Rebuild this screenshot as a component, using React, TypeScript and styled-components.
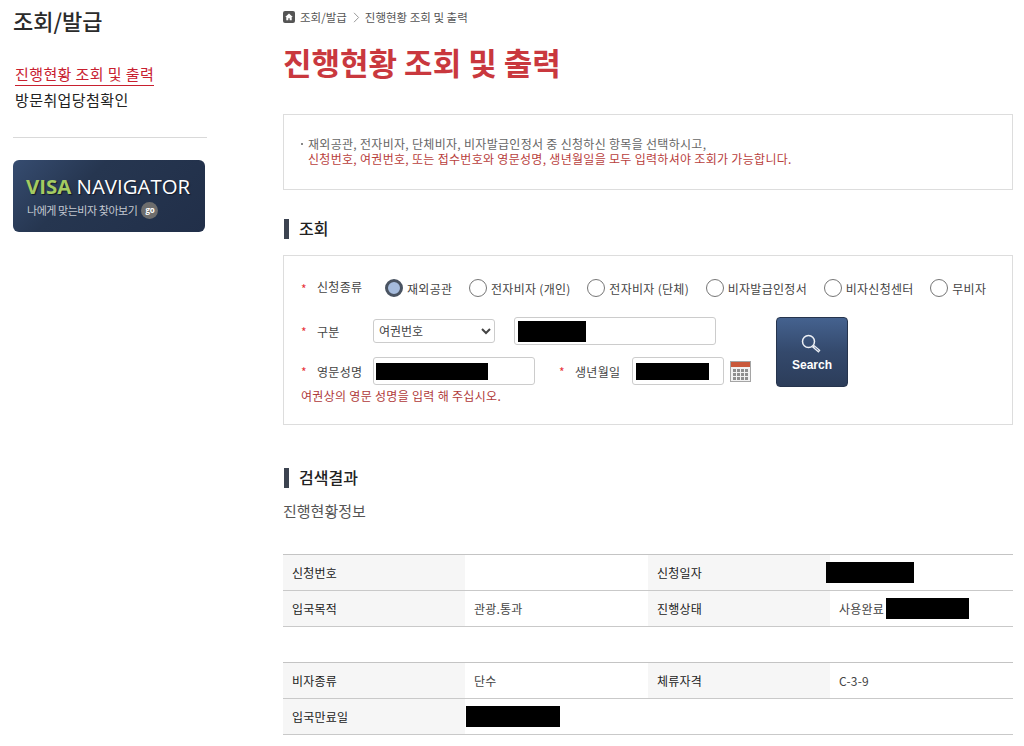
import React from 'react';
import styled, { createGlobalStyle } from 'styled-components';

const GlobalStyle = createGlobalStyle`
    * {
        box-sizing: border-box;
    }
    body {
        margin: 0;
        background: #fff;
        color: #333;
        font-family: "Noto Sans CJK KR", "Noto Sans", sans-serif;
        font-size: 12px;
    }
`;

const Page = styled.div`
    display: flex;
    width: 1024px;
    height: 746px;
    overflow: hidden;
`;

const Sidebar = styled.aside`
    flex: 0 0 283px;
    padding: 0 76px 0 13px;
`;

const SideTitle = styled.h2`
    margin: 4px 0 0;
    font-size: 22px;
    line-height: 32px;
    font-weight: 500;
    color: #2b2b2b;
`;

const SideMenu = styled.ul`
    margin: 26px 0 0;
    padding: 0 0 23px 2px;
    list-style: none;
    border-bottom: 1px solid #d9d9d9;
`;

const SideItem = styled.li<{ $active?: boolean }>`
    height: 26px;
    font-size: 15px;
    line-height: 24px;
    letter-spacing: 0.4px;
    color: ${(p) => (p.$active ? '#c8202f' : '#222')};

    span {
        display: inline-block;
        height: 24px;
        border-bottom: ${(p) => (p.$active ? '1px solid #c8202f' : 'none')};
    }
`;

const Banner = styled.a`
    display: block;
    width: 192px;
    height: 72px;
    margin-top: 22px;
    padding: 13px 0 0 13px;
    border-radius: 6px;
    background: linear-gradient(135deg, #364c70 0%, #263650 36%, #212f49 100%);
`;

const BannerTitle = styled.div`
    font-family: "Open Sans", sans-serif;
    font-size: 20.4px;
    line-height: 26px;
    color: #fff;
    white-space: nowrap;
    text-shadow: 1px 1px 1px #111a2b;

    b {
        font-weight: 700;
        color: #a4cb62;
    }
`;

const BannerSub = styled.div`
    display: flex;
    align-items: center;
    gap: 4px;
    margin: 2px 0 0 1px;
    font-size: 11px;
    line-height: 18px;
    letter-spacing: -0.45px;
    color: #c3c8d0;
`;

const GoBadge = styled.span`
    display: inline-flex;
    align-items: center;
    justify-content: center;
    width: 17px;
    height: 17px;
    border-radius: 50%;
    background: #6d6d6d;
    font-family: "Open Sans", sans-serif;
    font-size: 8px;
    font-weight: 700;
    color: #fff;
`;

const Main = styled.main`
    flex: 0 0 730px;
`;

const Breadcrumb = styled.nav`
    display: flex;
    align-items: center;
    height: 34px;
    color: #555;
    font-size: 11.5px;

    svg {
        flex: none;
    }
`;

const Crumb = styled.span`
    margin-left: 5px;
`;

const ChevronMark = styled.svg`
    margin-left: 6px;
`;

const PageTitle = styled.h1`
    margin: 8px 0 0;
    font-size: 31px;
    line-height: 40px;
    font-weight: 700;
    color: #c9383e;
`;

const Notice = styled.div`
    position: relative;
    height: 76px;
    margin-top: 32px;
    padding: 21px 0 0 24px;
    border: 1px solid #ddd;
    font-size: 12px;
    line-height: 15px;
    letter-spacing: 0.3px;
    color: #666;

    &::before {
        content: '';
        position: absolute;
        left: 17px;
        top: 28px;
        width: 2px;
        height: 2px;
        background: #888;
    }
`;

const NoticeRed = styled.div`
    color: #b8403c;
`;

const SectionTitle = styled.h3<{ $top: number }>`
    height: 20px;
    margin: ${(p) => p.$top}px 0 0 1px;
    padding-left: 10px;
    border-left: 5px solid #3c4350;
    font-size: 16px;
    line-height: 18px;
    font-weight: 500;
    color: #222;
`;

const FormBox = styled.form`
    height: 170px;
    margin-top: 16px;
    padding: 20px 0 0 17px;
    border: 1px solid #ddd;
    letter-spacing: 0.3px;
`;

const RadioRow = styled.div`
    display: flex;
    align-items: center;
    height: 24px;
`;

const Star = styled.span<{ $gap?: number }>`
    flex: none;
    width: 16px;
    margin-left: ${(p) => p.$gap ?? 0}px;
    color: #e8343a;
    font-size: 12px;
`;

const Label = styled.label<{ $width: number }>`
    flex: none;
    width: ${(p) => p.$width}px;
    color: #444;
`;

const RadioLabel = styled(Label)`
    padding-bottom: 3px;
`;

const RadioOption = styled.label`
    display: flex;
    align-items: center;
    gap: 4px;
    margin-right: 16.6px;
    color: #444;
    white-space: nowrap;
`;

const Radio = styled.input`
    appearance: none;
    flex: none;
    width: 18px;
    height: 18px;
    margin: 0;
    border: 1px solid #767676;
    border-radius: 50%;
    background: #fff;

    &:checked {
        border: 3px solid #4a5462;
        background: #a6bcdd;
    }
`;

const SearchArea = styled.div`
    display: flex;
    margin-top: 17px;
`;

const Fields = styled.div`
    flex: 0 0 475px;
`;

const FieldRow = styled.div<{ $top?: number }>`
    display: flex;
    align-items: center;
    height: 28px;
    margin-top: ${(p) => p.$top ?? 0}px;
`;

const Select = styled.select`
    flex: none;
    width: 122px;
    height: 24px;
    padding: 0 0 1px 1px;
    border: 1px solid #ccc;
    border-radius: 3px;
    background: #fff;
    color: #444;
    font: inherit;
`;

const Field = styled.div<{ $width: number; $gap?: number }>`
    position: relative;
    flex: none;
    width: ${(p) => p.$width}px;
    height: 28px;
    margin-left: ${(p) => p.$gap ?? 0}px;
`;

const TextInput = styled.input`
    width: 100%;
    height: 100%;
    border: 1px solid #ccc;
    border-radius: 3px;
    background: #fff;
`;

const InputMask = styled.span<{ $left: number; $top: number; $width: number; $height: number }>`
    position: absolute;
    left: ${(p) => p.$left}px;
    top: ${(p) => p.$top}px;
    width: ${(p) => p.$width}px;
    height: ${(p) => p.$height}px;
    background: #000;
`;

const CalendarButton = styled.span`
    display: flex;
    flex: none;
    margin-left: 6px;
`;

const Hint = styled.p`
    margin: 3px 0 0;
    font-size: 12px;
    line-height: 16px;
    color: #b03a3a;
`;

const SearchButton = styled.button`
    display: flex;
    flex-direction: column;
    align-items: center;
    width: 72px;
    height: 70px;
    padding: 15px 0 0;
    border: 1px solid #26344d;
    border-radius: 4px;
    background: linear-gradient(180deg, #45628f 0%, #34496c 50%, #2c3d5a 100%);
    color: #fff;
    font-family: "Liberation Sans", Arial, sans-serif;
    font-size: 12px;
    font-weight: 700;
    line-height: 14px;
    letter-spacing: 0;

    svg {
        margin: 0 2px 3px 0;
    }
`;

const SubTitle = styled.div`
    margin-top: 13px;
    font-size: 15px;
    line-height: 20px;
    color: #555;
`;

const Table = styled.table<{ $top: number }>`
    width: 730px;
    margin-top: ${(p) => p.$top}px;
    border-collapse: collapse;
    table-layout: fixed;
    border-top: 1px solid #c4c4c4;
    letter-spacing: 0.2px;
`;

const Th = styled.th`
    width: 182px;
    height: 36px;
    padding: 0 0 0 9px;
    border-bottom: 1px solid #c9c9c9;
    background: #f6f6f6;
    color: #222;
    font-size: 12px;
    font-weight: 400;
    text-align: left;
`;

const Td = styled.td`
    height: 36px;
    padding: 0 0 0 9px;
    border-bottom: 1px solid #c9c9c9;
    color: #444;
    font-size: 12px;
    white-space: nowrap;
`;

const CellRow = styled.div`
    display: flex;
    align-items: center;
`;

const Redacted = styled.span<{ $width: number; $offset: number }>`
    flex: none;
    width: ${(p) => p.$width}px;
    height: 21px;
    margin-left: ${(p) => p.$offset}px;
    background: #000;
`;

const HomeIcon = () => (
    <svg width="12" height="12" viewBox="0 0 12 12">
        <rect width="12" height="12" rx="2" fill="#555" />
        <path d="M6 2.4 2.2 6h1.1v3.2h2V7.2h1.4v2h2V6h1.1z" fill="#fff" />
    </svg>
);

const ChevronIcon = () => (
    <ChevronMark width="7" height="11" viewBox="0 0 7 11">
        <path d="M1 .8 5.6 5.5 1 10.2" fill="none" stroke="#999" strokeWidth="1" />
    </ChevronMark>
);

const MagnifierIcon = () => (
    <svg width="22" height="22" viewBox="0 0 22 22">
        <circle cx="8.5" cy="8.5" r="6" fill="none" stroke="#eef1f6" strokeWidth="1.5" />
        <path d="M13 13l6.5 5.5" stroke="#eef1f6" strokeWidth="3" />
        <path d="M14.5 14.2l4 3.4" stroke="#4a628a" strokeWidth="1" />
    </svg>
);

const CalendarIcon = () => (
    <svg width="21" height="21" viewBox="0 0 21 21">
        <rect x="0.5" y="0.5" width="20" height="20" fill="#f2f2f2" stroke="#a5a5a5" />
        <rect x="1" y="1" width="19" height="5" fill="#c9583a" />
        {[3, 7, 11, 15].map((x) =>
            [8, 12, 16].map((y) => <rect key={`${x}-${y}`} x={x} y={y} width="3" height="3" fill="#8f8f8f" />),
        )}
    </svg>
);

const visaTypes = ['재외공관', '전자비자 (개인)', '전자비자 (단체)', '비자발급인정서', '비자신청센터', '무비자'];

export default function App() {
    return (
        <Page>
            <GlobalStyle />
            <Sidebar>
                <SideTitle>조회/발급</SideTitle>
                <SideMenu>
                    <SideItem $active>
                        <span>진행현황 조회 및 출력</span>
                    </SideItem>
                    <SideItem>
                        <span>방문취업당첨확인</span>
                    </SideItem>
                </SideMenu>
                <Banner>
                    <BannerTitle>
                        <b>VISA</b> NAVIGATOR
                    </BannerTitle>
                    <BannerSub>
                        나에게 맞는비자 찾아보기 <GoBadge>go</GoBadge>
                    </BannerSub>
                </Banner>
            </Sidebar>
            <Main>
                <Breadcrumb>
                    <HomeIcon />
                    <Crumb>조회/발급</Crumb>
                    <ChevronIcon />
                    <Crumb>진행현황 조회 및 출력</Crumb>
                </Breadcrumb>
                <PageTitle>진행현황 조회 및 출력</PageTitle>
                <Notice>
                    재외공관, 전자비자, 단체비자, 비자발급인정서 중 신청하신 항목을 선택하시고,
                    <NoticeRed>신청번호, 여권번호, 또는 접수번호와 영문성명, 생년월일을 모두 입력하셔야 조회가 가능합니다.</NoticeRed>
                </Notice>

                <SectionTitle $top={29}>조회</SectionTitle>
                <FormBox>
                    <RadioRow>
                        <Star>*</Star>
                        <RadioLabel $width={68}>신청종류</RadioLabel>
                        {visaTypes.map((type, i) => (
                            <RadioOption key={type}>
                                <Radio type="radio" name="visaType" defaultChecked={i === 0} />
                                {type}
                            </RadioOption>
                        ))}
                    </RadioRow>
                    <SearchArea>
                        <Fields>
                            <FieldRow>
                                <Star>*</Star>
                                <Label $width={56}>구분</Label>
                                <Select defaultValue="passport">
                                    <option value="passport">여권번호</option>
                                </Select>
                                <Field $width={202} $gap={19}>
                                    <TextInput />
                                    <InputMask $left={4} $top={4} $width={68} $height={21} />
                                </Field>
                            </FieldRow>
                            <FieldRow $top={12}>
                                <Star>*</Star>
                                <Label $width={56}>영문성명</Label>
                                <Field $width={162}>
                                    <TextInput />
                                    <InputMask $left={3} $top={6} $width={112} $height={17} />
                                </Field>
                                <Star $gap={24}>*</Star>
                                <Label $width={57}>생년월일</Label>
                                <Field $width={92}>
                                    <TextInput />
                                    <InputMask $left={4} $top={6} $width={73} $height={17} />
                                </Field>
                                <CalendarButton>
                                    <CalendarIcon />
                                </CalendarButton>
                            </FieldRow>
                            <Hint>여권상의 영문 성명을 입력 해 주십시오.</Hint>
                        </Fields>
                        <SearchButton type="button">
                            <MagnifierIcon />
                            Search
                        </SearchButton>
                    </SearchArea>
                </FormBox>

                <SectionTitle $top={43}>검색결과</SectionTitle>
                <SubTitle>진행현황정보</SubTitle>

                <Table $top={33}>
                    <tbody>
                        <tr>
                            <Th>신청번호</Th>
                            <Td />
                            <Th>신청일자</Th>
                            <Td>
                                <CellRow>
                                    <Redacted $width={88} $offset={-13} />
                                </CellRow>
                            </Td>
                        </tr>
                        <tr>
                            <Th>입국목적</Th>
                            <Td>관광.통과</Td>
                            <Th>진행상태</Th>
                            <Td>
                                <CellRow>
                                    사용완료
                                    <Redacted $width={83} $offset={2} />
                                </CellRow>
                            </Td>
                        </tr>
                    </tbody>
                </Table>
                <Table $top={35}>
                    <tbody>
                        <tr>
                            <Th>비자종류</Th>
                            <Td>단수</Td>
                            <Th>체류자격</Th>
                            <Td>C-3-9</Td>
                        </tr>
                        <tr>
                            <Th>입국만료일</Th>
                            <Td colSpan={3}>
                                <CellRow>
                                    <Redacted $width={94} $offset={-8} />
                                </CellRow>
                            </Td>
                        </tr>
                    </tbody>
                </Table>
            </Main>
        </Page>
    );
}
